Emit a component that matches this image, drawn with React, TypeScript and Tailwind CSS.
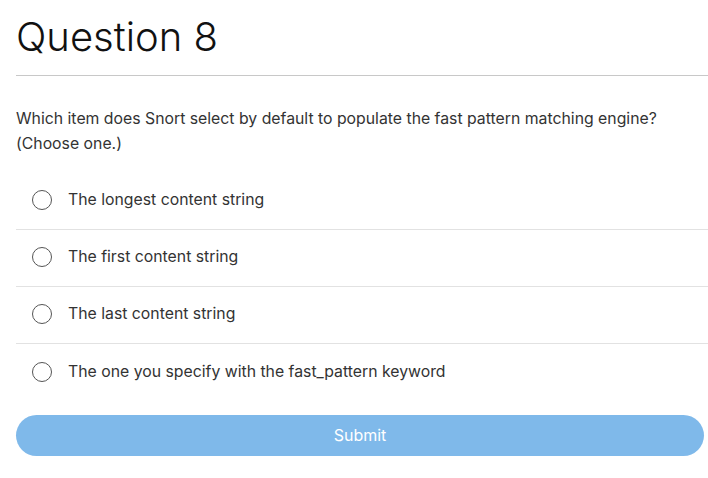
const options = [
  "The longest content string",
  "The first content string",
  "The last content string",
  "The one you specify with the fast_pattern keyword",
];

export default function App() {
  return (
    <div className="min-h-screen bg-white pl-4 font-['Inter',sans-serif] text-[#333333]">
      <h1 className="pt-[11px] text-[40px] font-light leading-[52px] text-[#111111]">Question 8</h1>
      <div className="mt-[12px] border-t border-[#c8c8c8]" />

      <p className="mt-[30px] pr-4 text-[15.8px] leading-[25px]">
        Which item does Snort select by default to populate the fast pattern matching engine? (Choose one.)
      </p>

      <div className="mt-[17px]">
        {options.map((opt, i) => (
          <label
            key={opt}
            className={
              "flex h-[57px] cursor-pointer items-center pb-[2px] pl-[16px] " +
              (i < options.length - 1 ? "border-b border-[#e2e2e2]" : "")
            }
          >
            <span className="h-[20px] w-[20px] shrink-0 rounded-full border border-[#555555]" />
            <span className="ml-[16px] text-[15.8px]">{opt}</span>
          </label>
        ))}
      </div>

      <div className="mt-[14px] pr-1">
        <button className="h-[41px] w-full rounded-full bg-[#7fb9ea] pb-[2px] text-[16px] font-normal text-white">
          Submit
        </button>
      </div>
    </div>
  );
}
